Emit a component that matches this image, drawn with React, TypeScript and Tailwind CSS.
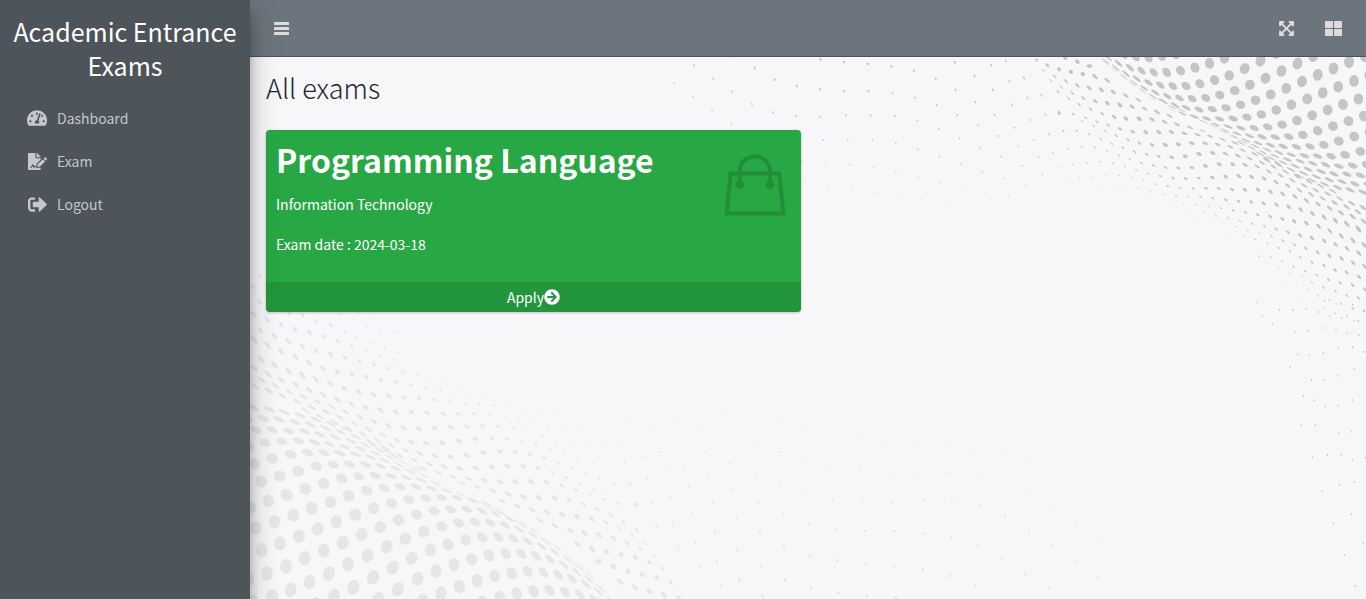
import type { ReactNode } from 'react';
import {
  FaArrowCircleRight,
  FaExpandArrowsAlt,
  FaFileSignature,
  FaSignOutAlt,
  FaTachometerAlt,
  FaThLarge,
} from 'react-icons/fa';

type Row = { row: number; start: number; pts: number[] };
type Mesh = { rows: Row[]; radius: (row: number, col: number) => number };

const nearMesh: Mesh = {
  radius: () => 0.3,
  rows: [
    { row: -7, start: 13, pts: [868, 936, 917, 930, 965, 930] },
    { row: -6, start: 10, pts: [697, 906, 749, 892, 800, 880, 851, 874, 898, 871, 945, 876, 989, 884, 1032, 898, 1072, 914] },
    { row: -5, start: 7, pts: [518, 902, 573, 880, 628, 860, 682, 842, 734, 828, 785, 820, 833, 814, 880, 817, 924, 824, 966, 836, 1007, 852, 1045, 874, 1082, 898] },
    { row: -4, start: 5, pts: [385, 897, 444, 868, 503, 836, 558, 813, 612, 794, 665, 778, 717, 767, 767, 761, 814, 761, 858, 767, 900, 778, 941, 794, 979, 814, 1016, 838, 1051, 864] },
    { row: -3, start: 2, pts: [195, 912, 252, 888, 310, 862, 369, 832, 428, 803, 485, 775, 541, 750, 594, 733, 647, 720, 697, 712, 745, 711, 790, 715, 833, 724, 875, 738, 914, 756, 951, 777, 986, 801, 1020, 827] },
    { row: -2, start: -1, pts: [9, 904, 66, 888, 122, 870, 179, 846, 237, 820, 294, 793, 352, 766, 410, 740, 466, 716, 521, 695, 575, 679, 626, 669, 675, 666, 721, 668, 765, 675, 808, 688, 848, 704, 886, 724, 922, 746, 957, 771, 990, 797] },
    { row: -1, start: -1, pts: [-5, 838, 51, 820, 108, 799, 164, 775, 221, 752, 278, 728, 335, 703, 391, 681, 446, 660, 500, 644, 552, 633, 602, 628, 650, 627, 696, 633, 737, 642, 778, 656, 817, 674, 854, 695, 890, 718, 925, 743] },
    { row: 0, start: -1, pts: [-20, 768, 35, 750, 90, 730, 147, 709, 203, 687, 259, 665, 316, 644, 371, 625, 425, 609, 477, 599, 527, 594, 576, 593, 622, 594, 667, 601, 709, 611, 748, 627, 785, 646, 822, 668, 857, 692, 891, 718] },
    { row: 1, start: 0, pts: [18, 684, 74, 665, 130, 645, 185, 625, 241, 606, 296, 587, 350, 572, 402, 564, 451, 560, 499, 560, 545, 565, 590, 572, 632, 583, 673, 598, 712, 616, 749, 636, 785, 659] },
    { row: 2, start: 0, pts: [3, 621, 55, 603, 110, 585, 166, 567, 221, 550, 275, 535, 326, 529, 375, 527, 423, 528, 468, 532, 513, 540, 556, 551, 597, 566, 637, 583, 676, 602, 713, 624] },
    { row: 3, start: 0, pts: [-20, 565, 34, 545, 89, 529, 145, 513, 199, 499, 249, 493, 298, 492, 346, 493, 392, 498, 437, 505, 480, 515, 521, 528, 561, 545, 600, 564, 638, 585] },
    { row: 4, start: 1, pts: [14, 491, 67, 475, 122, 463, 173, 458, 222, 458, 269, 460, 317, 463, 361, 471, 405, 482, 448, 495, 489, 510, 528, 528, 566, 548] },
    { row: 5, start: 1, pts: [-5, 440, 45, 428, 95, 424, 145, 422, 193, 427, 239, 432, 285, 440, 331, 446, 376, 459, 419, 472, 460, 488, 500, 506] },
    { row: 6, start: 2, pts: [18, 390, 67, 389, 116, 393, 163, 394, 209, 403, 256, 411, 302, 422, 346, 435, 389, 450, 431, 467] },
    { row: 7, start: 2, pts: [-9, 355, 39, 355, 87, 358, 134, 366, 180, 373, 226, 384, 272, 396, 318, 410, 362, 426, 405, 443] },
    { row: 8, start: 3, pts: [11, 323, 58, 328, 104, 336, 150, 345, 196, 357, 242, 371, 287, 387] },
  ],
};

const middleMesh: Mesh = {
  radius: (row, col) => Math.max(0.04, 0.16 + 0.012 * row - 0.009 * (col + 5)),
  rows: [
    { row: -9, start: -9, pts: [74, -138, 115, -121, 158, -109, 200, -91, 237, -69, 278, -57] },
    { row: -8, start: -10, pts: [53, -100, 95, -92, 136, -75, 179, -63, 221, -45, 258, -23, 299, -11, 341, 5] },
    { row: -7, start: -11, pts: [30, -70, 74, -54, 116, -46, 157, -29, 200, -17, 242, 1, 279, 23, 320, 35, 362, 51] },
    { row: -6, start: -12, pts: [9, -40, 51, -24, 95, -8, 140, 0, 182, 12, 224, 28, 266, 42, 308, 58, 350, 78, 390, 93, 434, 96] },
    { row: -5, start: -12, pts: [30, 6, 72, 22, 116, 38, 158, 46, 199, 63, 242, 75, 284, 93, 321, 115, 362, 127, 404, 143, 446, 157, 490, 170, 533, 183] },
    { row: -4, start: -13, pts: [10, 42, 52, 59, 93, 73, 135, 88, 179, 98, 221, 110, 264, 124, 305, 138, 347, 152, 388, 167, 432, 180, 475, 190, 517, 203, 560, 215, 605, 226, 655, 233] },
    { row: -3, start: -13, pts: [31, 91, 73, 108, 115, 124, 157, 139, 198, 152, 242, 162, 285, 172, 328, 183, 371, 194, 414, 205, 458, 214, 502, 224, 545, 235, 590, 245, 635, 255, 679, 260, 727, 268, 770, 275] },
    { row: -2, start: -14, pts: [12, 118, 53, 136, 94, 154, 136, 170, 177, 188, 218, 205, 262, 216, 306, 223, 349, 231, 393, 240, 438, 246, 482, 255, 527, 262, 571, 270, 616, 277, 661, 282, 705, 287, 750, 292, 797, 299, 842, 305, 886, 310] },
    { row: -1, start: -14, pts: [33, 178, 74, 195, 116, 213, 157, 225, 198, 238, 240, 250, 283, 265, 326, 275, 370, 283, 417, 288, 461, 292, 507, 295, 553, 300, 600, 306, 645, 311, 688, 312, 733, 315, 779, 320, 825, 332, 870, 343, 913, 345, 961, 346, 1009, 344] },
    { row: 0, start: -15, pts: [13, 205, 54, 222, 95, 240, 137, 254, 178, 270, 220, 285, 262, 298, 304, 312, 348, 322, 392, 330, 437, 337, 484, 337, 531, 338, 579, 341, 625, 342, 671, 341, 718, 344, 763, 350, 807, 357, 851, 370, 894, 382, 938, 387, 986, 388, 1034, 385, 1083, 379, 1138, 359] },
    { row: 1, start: -15, pts: [35, 240, 76, 257, 117, 275, 160, 290, 203, 305, 245, 320, 287, 335, 330, 352, 372, 364, 415, 377, 460, 383, 506, 386, 554, 384, 602, 381, 651, 379, 698, 377, 744, 379, 790, 386, 834, 395, 877, 407, 918, 421, 961, 433, 1007, 438, 1055, 434, 1107, 427, 1157, 417] },
    { row: 2, start: -16, pts: [15, 258, 57, 272, 98, 288, 142, 305, 185, 322, 228, 335, 270, 352, 313, 370, 355, 388, 398, 403, 440, 421, 484, 427, 528, 429, 577, 429, 627, 423, 676, 417, 725, 415, 771, 417, 815, 424, 858, 433, 900, 447, 940, 461, 983, 477, 1027, 490, 1074, 492, 1125, 485] },
    { row: 3, start: -13, pts: [167, 332, 210, 350, 253, 367, 295, 385, 338, 402, 381, 420, 423, 435, 467, 450, 510, 460, 554, 467, 601, 470, 650, 466, 700, 458, 749, 454, 796, 457, 839, 464, 883, 474, 925, 489, 965, 503, 1005, 520, 1047, 537, 1092, 550, 1140, 550] },
    { row: 4, start: -9, pts: [365, 432, 407, 450, 449, 466, 493, 480, 537, 492, 582, 500, 628, 505, 677, 505, 725, 501, 772, 499, 820, 499, 865, 505, 907, 517, 949, 532, 990, 550, 1031, 567, 1073, 584] },
    { row: 5, start: -6, pts: [520, 506, 565, 518, 610, 530, 656, 536, 703, 541, 750, 545, 796, 545, 843, 545, 890, 547, 935, 556, 978, 570, 1019, 583, 1060, 597, 1105, 610, 1156, 614] },
    { row: 6, start: -4, pts: [638, 550, 683, 562, 730, 573, 775, 582, 820, 591, 866, 593, 914, 594, 957, 600, 1000, 612, 1042, 628, 1083, 645, 1121, 667, 1160, 690] },
    { row: 7, start: -2, pts: [757, 604, 802, 618, 847, 630, 892, 637, 936, 643, 981, 649, 1025, 657, 1068, 668, 1108, 686, 1147, 707, 1186, 731] },
    { row: 8, start: 0, pts: [870, 662, 915, 677, 960, 690, 1003, 698, 1047, 705, 1090, 714, 1131, 729, 1172, 746, 1212, 768] },
    { row: 9, start: 2, pts: [982, 732, 1026, 746, 1070, 755, 1113, 763, 1156, 772, 1198, 787, 1238, 806] },
    { row: 10, start: 4, pts: [1046, 784, 1090, 800, 1134, 814, 1177, 824, 1221, 832, 1263, 848] },
    { row: 11, start: 5, pts: [1111, 845, 1155, 862, 1198, 874, 1242, 885, 1286, 893] },
  ],
};

const farMesh: Mesh = {
  radius: (row) => 0.034 + 0.005 * row,
  rows: [
    { row: -2, start: 2, pts: [1487, 286, 1571, 296, 1656, 303, 1738, 313, 1822, 327, 1906, 342, 1990, 353, 2074, 361] },
    { row: -1, start: 0, pts: [1339, 313, 1422, 328, 1504, 343, 1585, 361, 1666, 380, 1746, 400, 1828, 416, 1912, 427, 1999, 433, 2086, 437, 2172, 446, 2255, 458, 2335, 484] },
    { row: 0, start: -1, pts: [1277, 353, 1355, 378, 1434, 402, 1512, 428, 1589, 456, 1667, 483, 1746, 505, 1831, 515, 1920, 517, 2008, 517, 2097, 518, 2184, 523, 2266, 540, 2341, 576, 2410, 623, 2479, 672, 2547, 722] },
    { row: 1, start: -2, pts: [1216, 391, 1290, 423, 1366, 456, 1440, 489, 1516, 522, 1591, 557, 1668, 587, 1749, 602, 1837, 605, 1927, 606, 2019, 600, 2106, 604, 2190, 616, 2266, 646, 2337, 692, 2406, 738, 2475, 786, 2544, 832] },
    { row: 2, start: -2, pts: [1230, 455, 1303, 494, 1377, 531, 1449, 570, 1524, 607, 1599, 643, 1677, 670, 1758, 687, 1845, 693, 1933, 693, 2020, 700, 2104, 712, 2184, 735, 2256, 776, 2326, 820, 2397, 862] },
    { row: 3, start: -3, pts: [1178, 471, 1248, 516, 1317, 562, 1389, 607, 1459, 653, 1530, 698, 1602, 738, 1680, 767, 1762, 782, 1848, 792, 1933, 798, 2018, 808, 2099, 827, 2176, 857] },
    { row: 4, start: -3, pts: [1192, 537, 1260, 590, 1327, 644, 1395, 698, 1462, 748, 1533, 797, 1605, 839, 1683, 863, 1765, 879, 1851, 887, 1937, 893] },
    { row: 5, start: -3, pts: [1205, 608, 1270, 669, 1335, 728, 1401, 786, 1468, 839, 1538, 888] },
    { row: 6, start: -3, pts: [1219, 678, 1283, 741, 1348, 801, 1414, 859] },
  ],
};

const rightEdgeDots = [
  [772, 7], [838, 29], [878, 30], [919, 26], [956, 36], [974, 3], [990, 48], [1025, 54], [1062, 62], [1008, 12], [1058, 14],
  [1091, 34], [817, 73], [787, 49], [885, 95], [924, 92], [968, 84], [1008, 90], [1041, 100], [1077, 106], [893, 163], [928, 165],
  [970, 158], [1015, 145], [1058, 141], [1092, 155], [871, 202], [935, 240], [971, 240], [1014, 227], [1062, 208], [910, 287],
  [943, 301], [976, 319], [1014, 317], [1057, 300], [904, 376], [946, 374], [1016, 398], [1055, 395], [937, 472], [982, 465],
  [1024, 465], [1057, 479], [1096, 473], [967, 573], [1018, 555], [1063, 546], [1054, 643], [1000, 670], [1033, 765],
  [1090, 729], [1066, 858],
];

const meshes = [nearMesh, middleMesh, farMesh];

function meshDots(mesh: Mesh, name: number) {
  const points = new Map<string, [number, number]>();
  mesh.rows.forEach(({ row, start, pts }) => {
    for (let n = 0; n < pts.length; n += 2) {
      points.set(`${row},${start + n / 2}`, [pts[n], pts[n + 1]]);
    }
  });
  const tangent = (a?: [number, number], p?: [number, number], b?: [number, number]) => {
    const from = a ?? p!;
    const to = b ?? p!;
    const span = a && b ? 2 : 1;
    return [(to[0] - from[0]) / span, (to[1] - from[1]) / span];
  };
  return [...points.entries()].map(([key, p]) => {
    const [row, col] = key.split(',').map(Number);
    const u = tangent(points.get(`${row},${col - 1}`), p, points.get(`${row},${col + 1}`));
    let v = tangent(points.get(`${row - 1},${col}`), p, points.get(`${row + 1},${col}`));
    if (v[0] === 0 && v[1] === 0) v = [-28, -30];
    return (
      <circle
        key={`${name}:${key}`}
        r={mesh.radius(row, col)}
        transform={`matrix(${u[0]} ${u[1]} ${v[0]} ${v[1]} ${p[0]} ${p[1]})`}
      />
    );
  });
}

function HalftoneBackground() {
  return (
    <svg
      className="pointer-events-none absolute inset-0 h-full w-full"
      viewBox="250 57 1116 542"
      preserveAspectRatio="xMidYMid slice"
      aria-hidden="true"
    >
      <g fill="#e5e6e8" transform="matrix(.33333 0 0 .33333 250 300)">
        {meshes.map(meshDots)}
      </g>
      <g fill="#c4c5c7" transform="matrix(-.27667 0 0 -.27667 1378.9 282.9)">
        {meshes.map(meshDots)}
      </g>
      <g fill="#c4c5c7">
        {rightEdgeDots.map(([x, y]) => (
          <ellipse key={`${x}-${y}`} cx={1000 + x / 3} cy={300 + y / 3} rx={0.7} ry={1} />
        ))}
      </g>
    </svg>
  );
}

function MenuIcon() {
  return (
    <svg className="h-[13px] w-[15px]" viewBox="0 0 15 13" fill="currentColor" aria-hidden="true">
      <rect width="15" height="3" rx="0.500" />
      <rect y="5" width="15" height="3" rx="0.500" />
      <rect y="10" width="15" height="3" rx="0.500" />
    </svg>
  );
}

function BagIcon() {
  return (
    <svg className="h-[62px] w-[62px] shrink-0 text-black/15" viewBox="192 131 186 185" aria-hidden="true">
      <path
        fill="currentColor"
        fillRule="evenodd"
        d="M206 183H233V181C233 152 256 132 284.500 132S336 152 336 181V183H363L377 315H193ZM245 183H324V181C324 159 306 144 284.500 144S245 159 245 181ZM217 195L207 303H363L353 195H336V211A13 13 0 1 1 324 211V195H245V211A13 13 0 1 1 233 211V195Z"
      />
    </svg>
  );
}

function NavItem({ icon, label }: { icon: ReactNode; label: string }) {
  return (
    <li>
      <a href="#" className="flex h-10 items-center gap-2 rounded px-4 text-[#c2c7d0] hover:bg-white/10">
        <span className="flex w-6 justify-center">{icon}</span>
        <span>{label}</span>
      </a>
    </li>
  );
}

export default function App() {
  return (
    <div className="flex min-h-screen bg-[#f7f7fa] font-['Noto_Sans_CJK_SC','Source_Sans_Pro',sans-serif] text-[14px] leading-6 text-[#212529]">
      <aside className="z-10 w-[250px] shrink-0 bg-[#4d545a] shadow-[0_14px_28px_rgba(0,0,0,.25),0_10px_10px_rgba(0,0,0,.22)]">
        <h2 className="px-2 pt-[14px] text-center text-[25px] leading-[34px] text-white">Academic Entrance Exams</h2>
        <nav className="px-[9px] pt-4">
          <ul className="flex flex-col gap-[3px]">
            <NavItem icon={<FaTachometerAlt size={20} />} label="Dashboard" />
            <NavItem icon={<FaFileSignature size={19} />} label="Exam" />
            <NavItem icon={<FaSignOutAlt size={19} />} label="Logout" />
          </ul>
        </nav>
      </aside>
      <div className="flex min-w-0 flex-1 flex-col">
        <header className="flex h-[57px] items-center justify-between border-b border-[#4b545c] bg-[#6c757d] px-6 text-white/75">
          <button type="button" aria-label="Toggle menu">
            <MenuIcon />
          </button>
          <div className="flex items-center gap-[30px]">
            <button type="button" aria-label="Full screen">
              <FaExpandArrowsAlt size={17} />
            </button>
            <button type="button" aria-label="Control panel">
              <FaThLarge size={17} />
            </button>
          </div>
        </header>
        <main className="relative flex-1 overflow-hidden">
          <HalftoneBackground />
          <div className="relative px-4 pt-[14px]">
            <h1 className="text-[27px] leading-[34px] font-light">All exams</h1>
            <div className="grid grid-cols-2 gap-[14px] pt-[25px]">
              <section className="overflow-hidden rounded bg-[#28a745] text-white shadow-[0_0_1px_rgba(0,0,0,.125),0_1px_3px_rgba(0,0,0,.2)]">
                <div className="flex h-[152px] justify-between pr-[15px] pl-[10px]">
                  <div className="pt-2">
                    <h3 className="pb-3 text-[32px] leading-[42px] font-bold">Programming Language</h3>
                    <p className="pb-4">Information Technology</p>
                    <p>Exam date : 2024-03-18</p>
                  </div>
                  <div className="pt-6">
                    <BagIcon />
                  </div>
                </div>
                <a href="#" className="flex h-[30px] items-center justify-center bg-black/10">
                  Apply
                  <FaArrowCircleRight size={16} />
                </a>
              </section>
            </div>
          </div>
        </main>
      </div>
    </div>
  );
}
